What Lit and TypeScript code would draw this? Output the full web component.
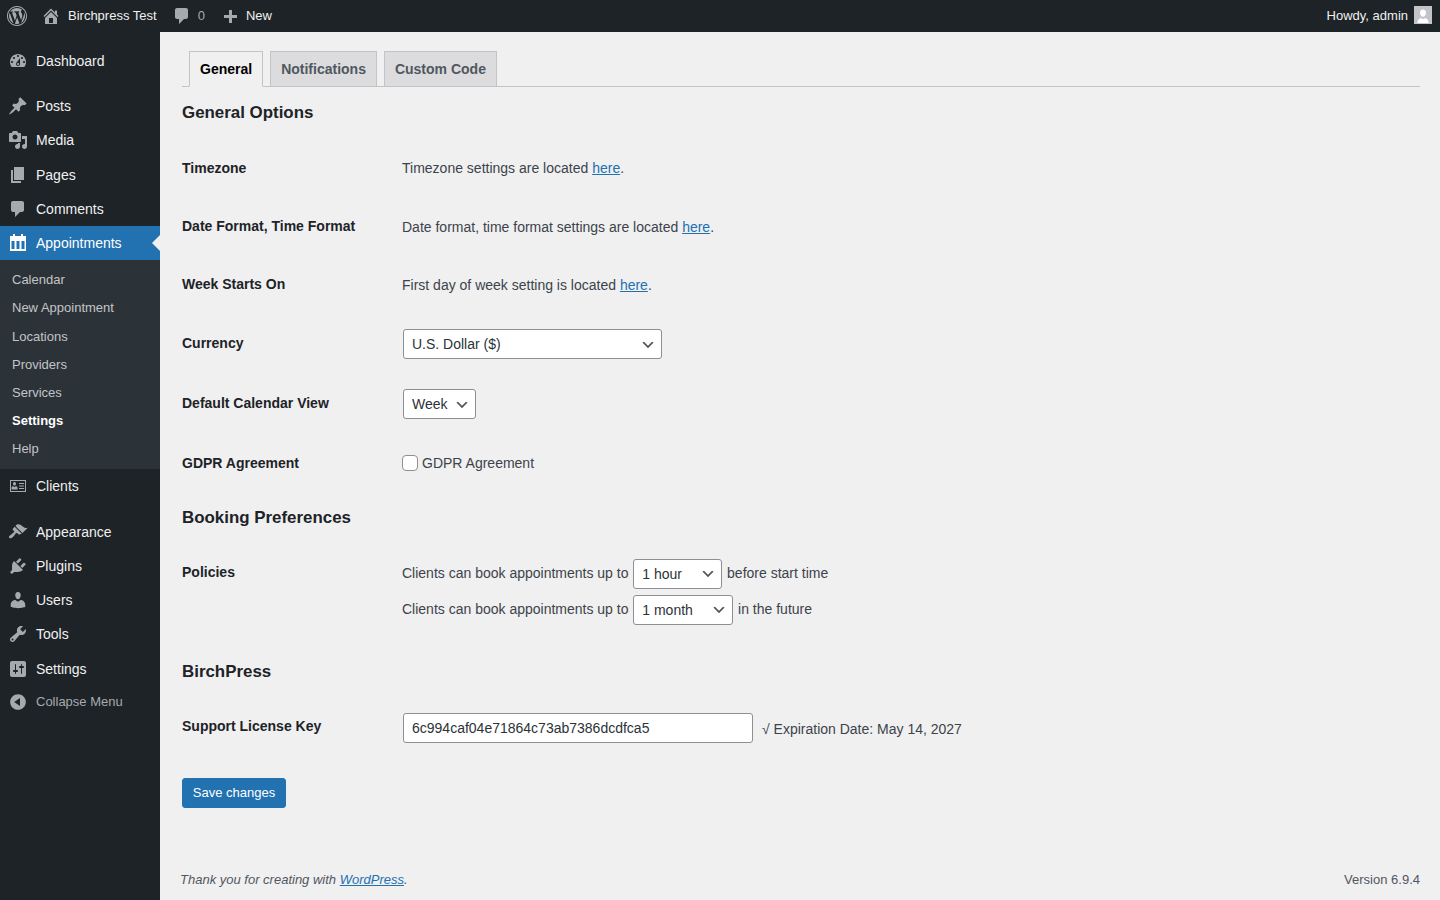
import { LitElement, html, css, svg } from 'lit';
import { customElement } from 'lit/decorators.js';

const ICONS: Record<string, string> = {
  wp: 'M20 10c0-5.52-4.48-10-10-10S0 4.48 0 10s4.48 10 10 10 10-4.48 10-10zM10 1.01c4.97 0 8.99 4.02 8.99 8.99s-4.02 8.99-8.99 8.99S1.01 14.97 1.01 10 5.03 1.01 10 1.01zM8.01 14.82L4.96 6.61c.49-.03 1.05-.08 1.05-.08.43-.05.38-1.01-.06-.99 0 0-1.29.1-2.13.1-.15 0-.33 0-.52-.01 1.44-2.17 3.9-3.6 6.7-3.6 2.09 0 3.99.79 5.41 2.09-.6-.08-1.45.35-1.45 1.42 0 .66.38 1.22.79 1.88.31.54.5 1.22.5 2.21 0 1.34-1.27 4.48-1.27 4.48l-2.71-7.5c.48-.03.75-.16.75-.16.43-.05.38-1.1-.05-1.08 0 0-1.3.11-2.14.11-.78 0-2.11-.11-2.11-.11-.43-.02-.48 1.06-.05 1.08l.84.08 1.12 3.04zm6.02 2.15L16.64 10s.67-1.69.39-3.81c.63 1.14.94 2.42.94 3.81 0 2.96-1.56 5.58-3.94 6.97zM2.68 6.77L6.5 17.25c-2.67-1.3-4.47-4.08-4.47-7.25 0-1.16.2-2.23.65-3.23zm7.45 4.53l2.29 6.25c-.75.27-1.57.42-2.42.42-.72 0-1.41-.11-2.06-.3z',
  home: 'M16 8.5l1.53 1.53-1.06 1.06L10 4.62l-6.47 6.47-1.06-1.06L10 2.5l4 4v-2h2v4zm-6-2.46l6 5.99V18H4v-5.97zM12 17v-5H8v5h4z',
  comment: 'M5 2h9c1.1 0 2 .9 2 2v7c0 1.1-.9 2-2 2h-2l-5 5v-5H5c-1.1 0-2-.9-2-2V4c0-1.1.9-2 2-2z',
  plus: 'M17 7v3h-5v5H9v-5H4V7h5V2h3v5h5z',
  dashboard: 'M3.76 16h12.48c1.1-1.37 1.76-3.11 1.76-5 0-4.42-3.58-8-8-8s-8 3.58-8 8c0 1.89.66 3.63 1.76 5zM10 4c.55 0 1 .45 1 1s-.45 1-1 1-1-.45-1-1 .45-1 1-1zM6 6c.55 0 1 .45 1 1s-.45 1-1 1-1-.45-1-1 .45-1 1-1zm8 0c.55 0 1 .45 1 1s-.45 1-1 1-1-.45-1-1 .45-1 1-1zm-5.37 5.55L12 7v6c0 1.1-.9 2-2 2s-2-.9-2-2c0-.57.24-1.08.63-1.45zM4 10c.55 0 1 .45 1 1s-.45 1-1 1-1-.45-1-1 .45-1 1-1zm12 0c.55 0 1 .45 1 1s-.45 1-1 1-1-.45-1-1 .45-1 1-1zm-5 3c0-.55-.45-1-1-1s-1 .45-1 1 .45 1 1 1 1-.45 1-1z',
  posts: 'M10.44 3.02l1.82-1.82 6.36 6.35-1.83 1.82c-1.05-.68-2.48-.57-3.41.36l-.75.75c-.92.93-1.04 2.35-.35 3.41l-1.83 1.82-2.41-2.41-2.8 2.79c-.42.42-3.38 2.71-3.8 2.29s1.86-3.39 2.28-3.81l2.79-2.79L4.1 9.36l1.83-1.82c1.05.69 2.48.57 3.4-.36l.75-.75c.93-.92 1.05-2.35.36-3.41z',
  media: 'M13 11V4c0-.55-.45-1-1-1h-1.67L9 1H5L3.67 3H2c-.55 0-1 .45-1 1v7c0 .55.45 1 1 1h10c.55 0 1-.45 1-1zM7 4.5c1.38 0 2.5 1.12 2.5 2.5S8.38 9.5 7 9.5 4.5 8.38 4.5 7 5.62 4.5 7 4.5zM14 6h5v10.5c0 1.38-1.12 2.5-2.5 2.5S14 17.88 14 16.5s1.12-2.5 2.5-2.5c.17 0 .34.02.5.05V9h-3V6zm-4 8.05V13h2v3.5c0 1.38-1.12 2.5-2.5 2.5S7 17.88 7 16.5 8.12 14 9.5 14c.17 0 .34.02.5.05z',
  pages: 'M6 15V2h10v13H6zm-1 1h8v2H3V5h2v11z',
  calendar: 'M5 1h2v2h6V1h2v2h3v15H2V3h3V1zM3.5 8v8h3V8h-3zm5 0v8h3V8h-3zm5 0v8h3V8h-3z',
  clients: 'M2 4h16v12H2V4zm1 1v10h14V5H3zm3.5 1C5.6 6 5 6.8 5 7.7 5 8.7 5.6 9.6 6.5 9.6S8 8.7 8 7.7C8 6.8 7.4 6 6.5 6zM3.5 13.5h6v-1.8c0-.7-.8-1.4-1.6-1.4l-1.4.6-1.4-.6c-.8 0-1.6.7-1.6 1.4v1.8zM11 7h5v1h-5V7zm0 2.5h5v1h-5v-1zm0 2.5h5v1h-5v-1z',
  appearance: 'M14.48 11.06L7.41 3.99l1.5-1.5c.5-.56 2.3-.47 3.51.32 1.21.8 1.43 1.28 2.91 2.1 1.18.64 2.45 1.26 4.45.85zm-.71.71L6.7 4.7 4.93 6.47c-.39.39-.39 1.02 0 1.41l1.06 1.06c.39.39.39 1.03 0 1.42-.6.6-1.43 1.11-2.21 1.69-.35.26-.7.53-1.01.84C1.43 13.23.4 14.89 1.4 15.88c.99 1 2.65-.03 3.99-1.37.31-.31.58-.66.84-1.01.58-.78 1.09-1.61 1.69-2.21.39-.39 1.03-.39 1.42 0l1.06 1.06c.39.39 1.02.39 1.41 0z',
  plugins: 'M13.11 4.36L9.87 7.6 8 5.73l3.24-3.24c.35-.34 1.05-.2 1.56.32.52.51.66 1.21.31 1.55zm-8 1.77l.91-1.12 9.01 9.01-1.19.84c-.71.71-2.63 1.16-3.82 1.16H6.14L4.9 17.26c-.59.59-1.54.59-2.12 0-.59-.58-.59-1.53 0-2.12l1.24-1.24v-3.88c0-1.13.4-3.19 1.09-3.89zm7.26 3.97l3.24-3.24c.34-.35 1.04-.21 1.55.31.52.51.66 1.21.31 1.55l-3.24 3.25z',
  users: 'M10 9.25c-2.27 0-2.73-3.44-2.73-3.44C7 4.02 7.82 2 9.97 2c2.16 0 2.98 2.02 2.71 3.81 0 0-.41 3.44-2.68 3.44zm0 2.57L12.72 10c2.39 0 4.52 2.33 4.52 4.53v2.49s-3.65 1.13-7.24 1.13c-3.65 0-7.24-1.13-7.24-1.13v-2.49c0-2.25 1.94-4.48 4.47-4.48z',
  tools: 'M16.68 9.77c-1.34 1.34-3.3 1.67-4.95.99l-5.41 6.52c-.99.99-2.59.99-3.58 0s-.99-2.59 0-3.57l6.52-5.42c-.68-1.65-.35-3.61.99-4.95 1.28-1.28 3.12-1.62 4.72-1.06l-2.89 2.89 2.82 2.82 2.86-2.87c.53 1.58.18 3.39-1.08 4.65zM3.81 16.21c.4.39 1.04.39 1.43 0 .4-.4.4-1.04 0-1.43-.39-.4-1.03-.4-1.43 0-.39.39-.39 1.03 0 1.43z',
  settings: 'M18 16V4c0-1.1-.9-2-2-2H4c-1.1 0-2 .9-2 2v12c0 1.1.9 2 2 2h12c1.1 0 2-.9 2-2zM8 11h1c.55 0 1 .45 1 1s-.45 1-1 1H8v1.5c0 .28-.22.5-.5.5s-.5-.22-.5-.5V13H6c-.55 0-1-.45-1-1s.45-1 1-1h1V5.5c0-.28.22-.5.5-.5s.5.22.5.5V11zm5-2h-1c-.55 0-1-.45-1-1s.45-1 1-1h1V5.5c0-.28.22-.5.5-.5s.5.22.5.5V7h1c.55 0 1 .45 1 1s-.45 1-1 1h-1v5.5c0 .28-.22.5-.5.5s-.5-.22-.5-.5V9z',
  collapse: 'M10 2.16c4.33 0 7.84 3.51 7.84 7.84s-3.51 7.84-7.84 7.84S2.16 14.33 2.16 10 5.71 2.16 10 2.16zm2 11.72V6.12L6.18 9.97z',
};

const icon = (name: string, size = 20) => html`<svg class="icon" width=${size} height=${size} viewBox="0 0 20 20" aria-hidden="true">${svg`<path fill="currentColor" fill-rule="evenodd" d=${ICONS[name]}></path>`}</svg>`;

const SUBMENU = ['Calendar', 'New Appointment', 'Locations', 'Providers', 'Services', 'Settings', 'Help'];

@customElement('app-root')
export class AppRoot extends LitElement {
  static styles = css`
    :host {
      display: block;
      font-family: 'Liberation Sans', Arial, sans-serif;
      font-size: 14px;
      color: #3c434a;
      background: #f0f0f1;
    }
    * { box-sizing: border-box; }
    a { color: #2271b1; }

    .adminbar {
      height: 32px;
      background: #1d2327;
      color: #f0f0f1;
      font-size: 13px;
      display: flex;
      align-items: center;
      justify-content: space-between;
      padding: 0 8px 0 7px;
    }
    .bar-side { display: flex; align-items: center; }
    .bar-side span { margin-bottom: 2px; }
    .bar-side .icon { color: #a7aaad; display: block; }
    .site { margin-left: 16px; display: flex; align-items: center; gap: 7px; }
    .site .icon { margin-left: -2px; }
    .bubble { margin-left: 17px; display: flex; align-items: center; gap: 7px; color: #a7aaad; }
    .bubble .icon { margin-left: -2px; margin-right: -1px; }
    .new { margin-left: 17px; display: flex; align-items: center; gap: 7px; }
    .new .icon { margin-left: -2px; margin-top: 3px; margin-right: -1px; }
    .howdy { margin-right: 6px; }
    .avatar {
      width: 18px;
      height: 18px;
      background: #c3c4c7;
      display: block;
      margin-top: -2px;
    }

    .body { display: flex; min-height: 868px; }

    .sidebar {
      width: 160px;
      flex: none;
      background: #1d2327;
      padding-top: 12px;
    }
    .item {
      display: flex;
      align-items: flex-start;
      height: 34.2px;
      padding: 8px 0 0 8px;
      color: #f0f0f1;
      line-height: 18.2px;
      position: relative;
    }
    .item .icon {
      flex: none;
      color: #a7aaad;
      margin-top: -1px;
      margin-right: 8px;
    }
    .item.gap { margin-bottom: 11px; }
    .item.gap-wide { margin-bottom: 11.6px; }
    .item.current { background: #2271b1; color: #fff; }
    .item.current .icon { color: #fff; }
    .item.current::after {
      content: '';
      position: absolute;
      right: 0;
      top: 9px;
      border: 8px solid transparent;
      border-right-color: #f0f0f1;
      border-left-width: 0;
    }
    .sub {
      background: #2c3338;
      padding: 6px 0 5.6px;
      font-size: 13px;
      color: #c3c4c7;
    }
    .sub div { padding: 5px 12px; height: 28.2px; line-height: 18.2px; }
    .sub .on { color: #fff; font-weight: 700; }
    .collapse { color: #a7aaad; font-size: 13px; margin-top: -0.6px; }

    .main {
      flex: 1;
      min-width: 0;
      display: flex;
      flex-direction: column;
      padding: 0 20px;
    }
    .wrap { padding: 19px 0 0 2px; }
    .tabs {
      display: flex;
      gap: 7px;
      padding-left: 7px;
      border-bottom: 1px solid #c3c4c7;
      height: 36px;
    }
    .tab {
      height: 36px;
      padding: 5px 10px;
      border: 1px solid #c3c4c7;
      background: #dcdcde;
      color: #50575e;
      font-weight: 700;
      line-height: 24px;
    }
    .tab.active { background: #f0f0f1; color: #000; border-bottom-color: #f0f0f1; }

    h2 {
      margin: 14px 0 15px;
      font-size: 16.9px;
      line-height: 23.4px;
      font-weight: 700;
      color: #1d2327;
    }
    h2.after { margin: 13.8px 0 14.3px; }
    h2.last { margin: 20.3px 0 14.3px; }

    .row { display: grid; grid-template-columns: 220px 1fr; }
    .label {
      padding: 19.65px 0 20.35px;
      line-height: 18.2px;
      font-weight: 700;
      color: #1d2327;
    }
    .value { padding: 15px 0; }
    .text { line-height: 28.2px; }
    .line { display: flex; align-items: flex-start; gap: 3.8px; height: 30px; line-height: 28px; }
    .line + .line { margin-top: 6px; }

    select, input[type='text'] {
      font-family: inherit;
      font-size: 14px;
      color: #2c3338;
      height: 30px;
      margin: 0 1px;
      border: 1px solid #8c8f94;
      border-radius: 3px;
      background-color: #fff;
      display: block;
    }
    select {
      appearance: none;
      padding: 0 24px 0 8px;
      background-image: url('data:image/svg+xml;charset=US-ASCII,%3Csvg%20width%3D%2220%22%20height%3D%2220%22%20xmlns%3D%22http%3A%2F%2Fwww.w3.org%2F2000%2Fsvg%22%3E%3Cpath%20d%3D%22M5%206l5%205%205-5%202%201-7%207-7-7%202-1z%22%20fill%3D%22%23555%22%2F%3E%3C%2Fsvg%3E');
      background-repeat: no-repeat;
      background-size: 16px 16px;
      background-position: right 5px top 55%;
    }
    .w-currency { width: 259px; }
    .w-view { width: 73px; }
    .w-before { width: 89px; }
    .w-future { width: 100px; }
    input[type='text'] { width: 350px; padding: 0 8px; }

    .check { display: flex; align-items: center; gap: 4px; height: 28.2px; }
    .box {
      width: 16px;
      height: 16px;
      border: 1px solid #8c8f94;
      border-radius: 4px;
      background: #fff;
      appearance: none;
      margin: 0;
    }
    .license { display: flex; align-items: center; }
    .license span { margin-left: 8px; padding-top: 2px; }

    .save {
      margin: 20px 0 0;
      height: 30px;
      width: 104px;
      padding: 0;
      background: #2271b1;
      border: 1px solid #2271b1;
      border-radius: 3px;
      color: #fff;
      font-family: inherit;
      font-size: 13px;
      display: block;
    }

    .footer {
      margin-top: auto;
      display: flex;
      justify-content: space-between;
      font-size: 13px;
      line-height: 18px;
      color: #50575e;
      padding-bottom: 11px;
    }
    .footer em { font-style: italic; }
  `;

  private menuItem(name: string, label: string, cls = '') {
    return html`<div class="item ${cls}">${icon(name)}<span>${label}</span></div>`;
  }

  render() {
    return html`
      <div class="adminbar">
        <div class="bar-side">
          ${icon('wp')}
          <div class="site">${icon('home')}<span>Birchpress Test</span></div>
          <div class="bubble">${icon('comment')}<span>0</span></div>
          <div class="new">${icon('plus')}<span>New</span></div>
        </div>
        <div class="bar-side">
          <span class="howdy">Howdy, admin</span>
          <svg class="avatar" viewBox="0 0 18 18" aria-hidden="true">
            <path fill="#fff" d="M9 3.5c-1.9 0-3 1.5-3 3.3 0 2 1.2 4 3 4s3-2 3-4c0-1.8-1.1-3.3-3-3.3zM3.5 16.5c0-2.8 2-4 3.6-4.4L9 13.2l1.9-1.1c1.6.4 3.6 1.6 3.6 4.4v.5h-11z"></path>
          </svg>
        </div>
      </div>
      <div class="body">
        <nav class="sidebar">
          ${this.menuItem('dashboard', 'Dashboard', 'gap')}
          ${this.menuItem('posts', 'Posts')}
          ${this.menuItem('media', 'Media')}
          ${this.menuItem('pages', 'Pages')}
          ${this.menuItem('comment', 'Comments')}
          ${this.menuItem('calendar', 'Appointments', 'current')}
          <div class="sub">
            ${SUBMENU.map((s) => html`<div class=${s === 'Settings' ? 'on' : ''}>${s}</div>`)}
          </div>
          ${this.menuItem('clients', 'Clients', 'gap-wide')}
          ${this.menuItem('appearance', 'Appearance')}
          ${this.menuItem('plugins', 'Plugins')}
          ${this.menuItem('users', 'Users')}
          ${this.menuItem('tools', 'Tools')}
          ${this.menuItem('settings', 'Settings')}
          ${this.menuItem('collapse', 'Collapse Menu', 'collapse')}
        </nav>
        <main class="main">
          <div class="wrap">
            <div class="tabs">
              <div class="tab active">General</div>
              <div class="tab">Notifications</div>
              <div class="tab">Custom Code</div>
            </div>

            <h2>General Options</h2>
            <div class="row">
              <div class="label">Timezone</div>
              <div class="value text">Timezone settings are located <a href="#">here</a>.</div>
            </div>
            <div class="row">
              <div class="label">Date Format, Time Format</div>
              <div class="value text">Date format, time format settings are located <a href="#">here</a>.</div>
            </div>
            <div class="row">
              <div class="label">Week Starts On</div>
              <div class="value text">First day of week setting is located <a href="#">here</a>.</div>
            </div>
            <div class="row">
              <div class="label">Currency</div>
              <div class="value"><select class="w-currency"><option>U.S. Dollar ($)</option></select></div>
            </div>
            <div class="row">
              <div class="label">Default Calendar View</div>
              <div class="value"><select class="w-view"><option>Week</option></select></div>
            </div>
            <div class="row">
              <div class="label">GDPR Agreement</div>
              <div class="value">
                <label class="check"><input class="box" type="checkbox" />GDPR Agreement</label>
              </div>
            </div>

            <h2 class="after">Booking Preferences</h2>
            <div class="row">
              <div class="label">Policies</div>
              <div class="value">
                <div class="line">
                  Clients can book appointments up to
                  <select class="w-before"><option>1 hour</option></select>
                  before start time
                </div>
                <div class="line">
                  Clients can book appointments up to
                  <select class="w-future"><option>1 month</option></select>
                  in the future
                </div>
              </div>
            </div>

            <h2 class="last">BirchPress</h2>
            <div class="row">
              <div class="label">Support License Key</div>
              <div class="value license">
                <input type="text" value="6c994caf04e71864c73ab7386dcdfca5" />
                <span>√ Expiration Date: May 14, 2027</span>
              </div>
            </div>
            <button class="save">Save changes</button>
          </div>
          <div class="footer">
            <em>Thank you for creating with <a href="#">WordPress</a>.</em>
            <span>Version 6.9.4</span>
          </div>
        </main>
      </div>
    `;
  }
}
